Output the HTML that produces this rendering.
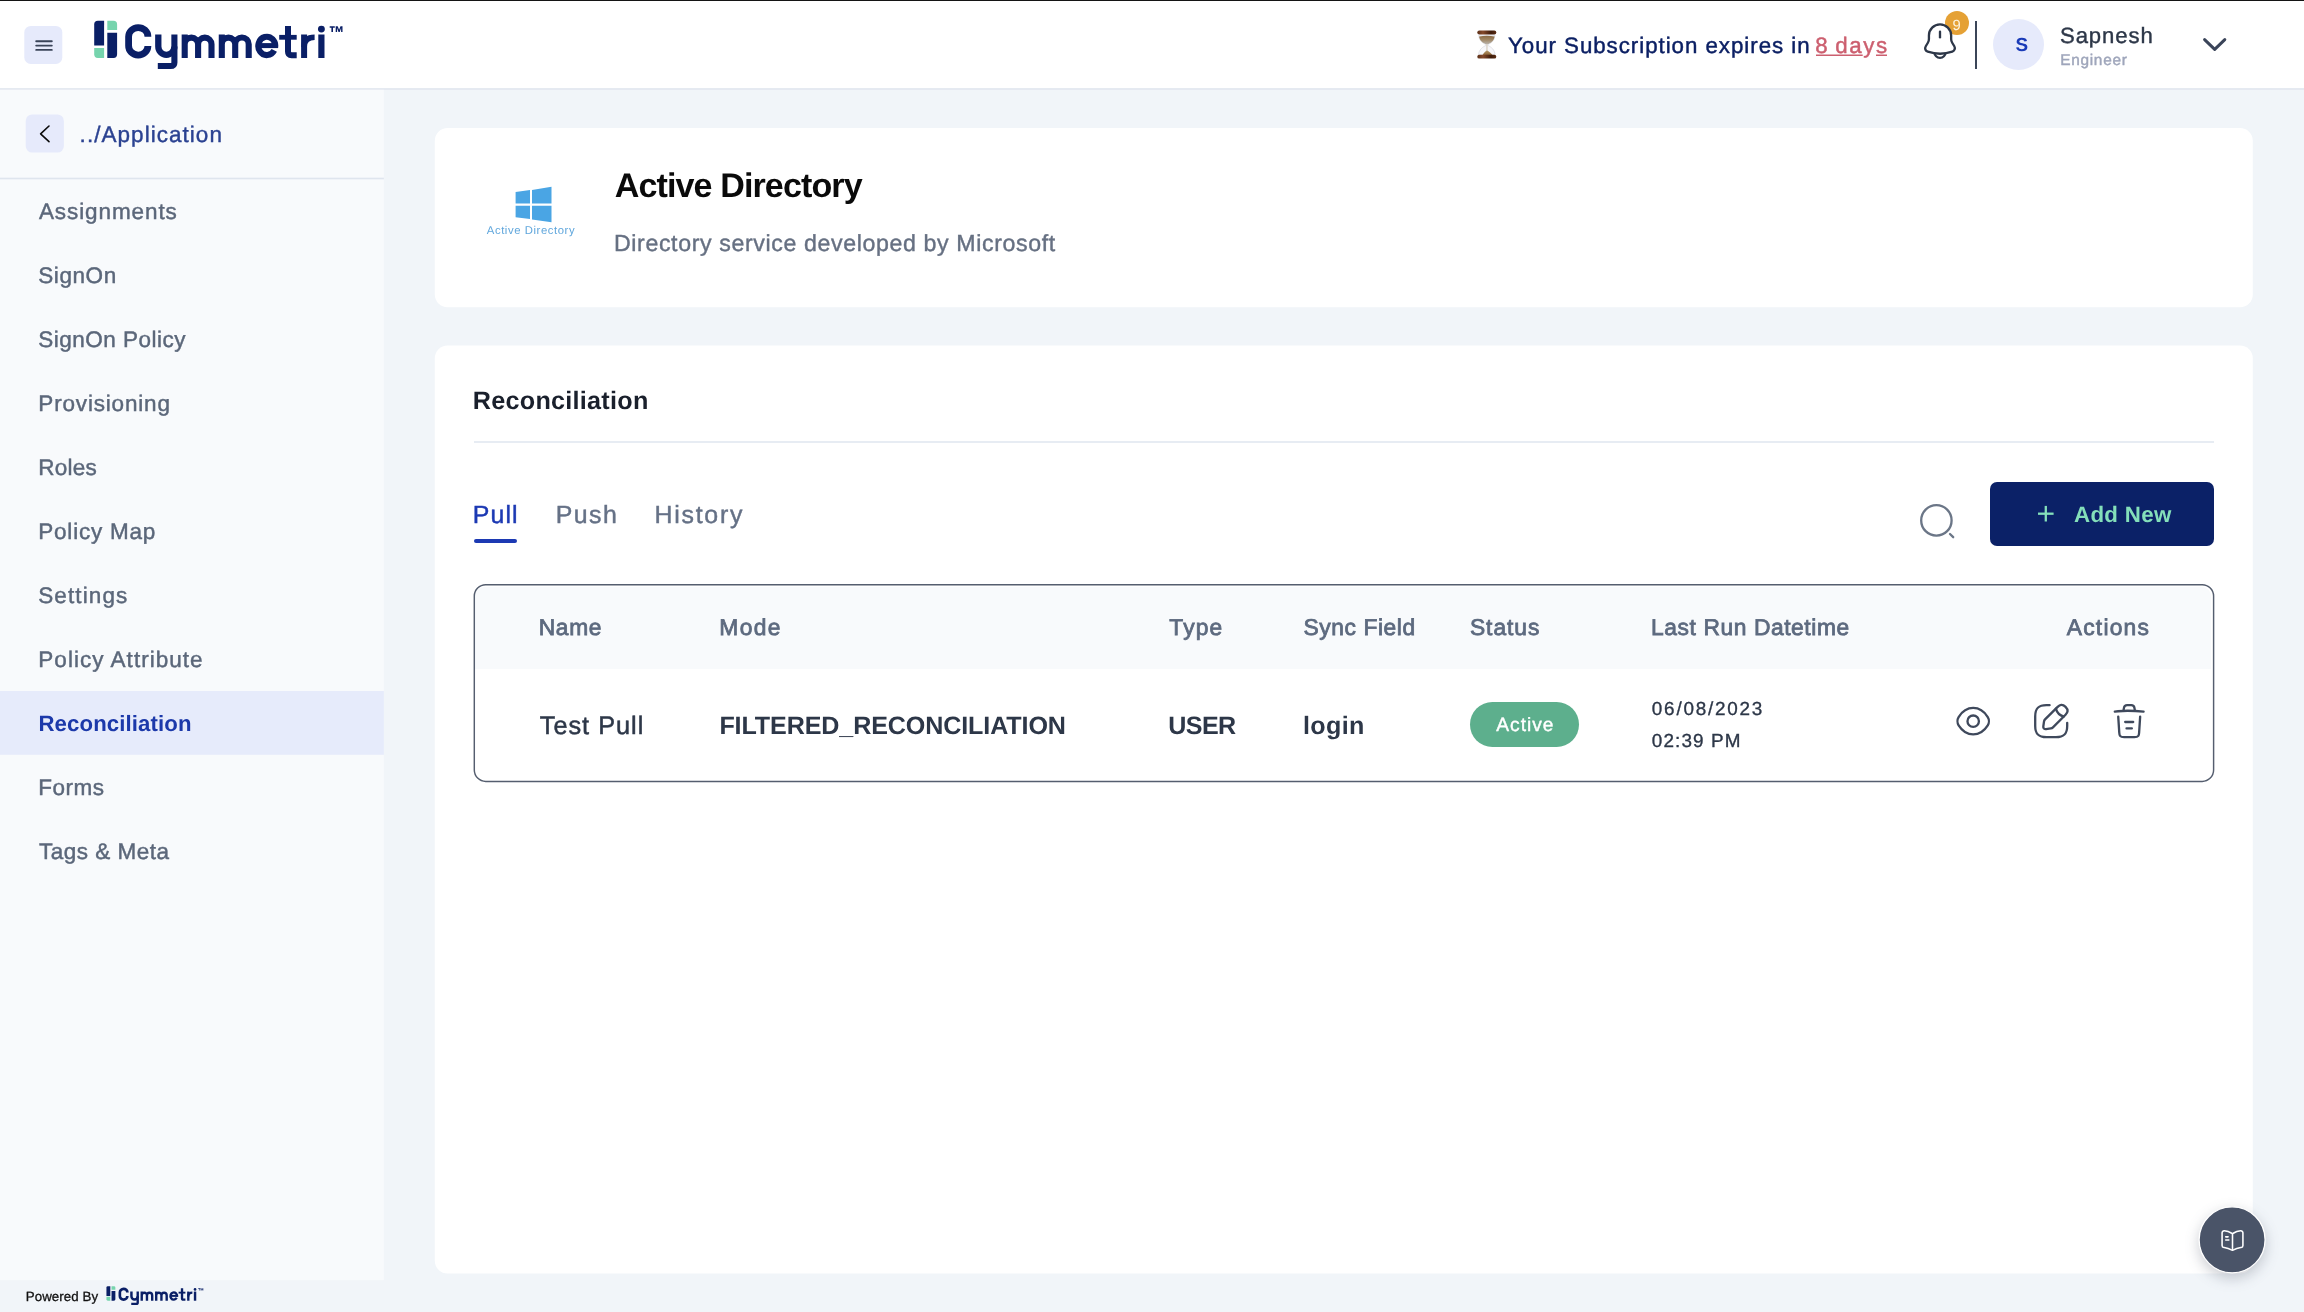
<!DOCTYPE html>
<html lang="en">
<head>
<meta charset="utf-8">
<title>Cymmetri - Reconciliation</title>
<style>
*{box-sizing:border-box;margin:0;padding:0}
html,body{width:2304px;height:1312px;overflow:hidden}
body{text-rendering:geometricPrecision;background:#f1f5f9;font-family:"Liberation Sans",sans-serif;position:relative}
.abs{position:absolute}
.t{position:absolute;white-space:nowrap;font-family:"Liberation Sans",sans-serif}
#topline{left:0;top:0;width:2304px;height:1px;background:#141414}
#header{left:0;top:1px;width:2304px;height:88px;background:#fff;border-bottom:1px solid #e2e8f0}
#sidebar{left:0;top:89px;width:384px;height:1191px;background:#f8fafc}
#sbdiv{left:0;top:178px;width:384px;height:1px;background:#dde4ee}
#active{left:0;top:691px;width:384px;height:64px;background:#e6ebfb}
.sqbtn{width:38px;height:38px;border-radius:7px;background:#e6eafb}
.card{background:#fff;border-radius:16px}
#card1{left:435px;top:128px;width:1817px;height:179px}
#card2{left:435px;top:346px;width:1817px;height:927px}
#hdiv{left:474px;top:441px;width:1740px;height:1px;background:#e2e8f0}
#tabul{left:474px;top:539px;width:43px;height:4px;border-radius:2px;background:#1c39b3}
#addbtn{left:1990px;top:482px;width:224px;height:64px;border-radius:7px;background:#0b2167}
#table{left:474px;top:584px;width:1740px;height:198px;border:1.5px solid #4a5568;border-radius:13px;background:#fff;overflow:hidden}
#thead{left:475px;top:587px;width:1736px;height:81.6px;background:#f8fafc;border-radius:9px 9px 0 0}
#pill{left:1470.4px;top:702.2px;width:108.8px;height:44.7px;border-radius:22.4px;background:#5daf8d}
#fab{left:2198px;top:1206px;width:68px;height:68px;border-radius:50%;background:#4a5468;border:1.5px solid #fff;box-shadow:0 6px 14px rgba(40,50,70,.28)}
#avatar{left:1993px;top:19px;width:51px;height:51px;border-radius:50%;background:#e6eafb}
#badge{left:1945px;top:11px;width:24px;height:24px;border-radius:50%;background:#e5a135}
#vdiv{left:1975px;top:21px;width:2px;height:48px;background:#3b4558}
svg{position:absolute;overflow:visible}
</style>
</head>
<body>
<svg style="left:0;top:0" width="2304" height="1312" viewBox="0 0 2304 1312" shape-rendering="geometricPrecision">
<rect x="0" y="0" width="2304" height="88.2" fill="#fff"/>
<rect x="0" y="88.2" width="2304" height="1.6" fill="#e2e7ef"/>
<rect x="0" y="89.8" width="383.9" height="1190.3" fill="#f8fafc"/>
<rect x="0" y="177.7" width="383.9" height="1.6" fill="#dfe5ee"/>
<rect x="0" y="691" width="383.9" height="63.8" fill="#e6ebfb"/>
<rect x="434.8" y="128.1" width="1818" height="179.1" rx="12.8" fill="#fff"/>
<rect x="434.8" y="345.6" width="1818" height="928" rx="12.8" fill="#fff"/>
<rect x="474" y="441.2" width="1740" height="1.6" fill="#e2e8f0"/>
</svg>
<div class="abs" id="topline"></div>

<!-- menu button -->
<svg style="left:0;top:0" width="100" height="160" viewBox="0 0 100 160"><rect x="24.3" y="25.9" width="38" height="38" rx="6.5" fill="#e6eafb"/><rect x="25.7" y="114.4" width="38.2" height="38.2" rx="6.5" fill="#e6eafb"/></svg>
<svg style="left:24.3px;top:25.9px" width="38" height="38" viewBox="0 0 38 38"><g stroke="#3a4459" stroke-width="1.9" stroke-linecap="round"><line x1="12.2" y1="15.2" x2="27.8" y2="15.2"/><line x1="12.2" y1="19.6" x2="27.8" y2="19.6"/><line x1="12.2" y1="23.9" x2="27.8" y2="23.9"/></g></svg>

<!-- logo -->
<svg style="left:0;top:0" width="400" height="89" viewBox="0 0 400 89">
<defs>
<g id="cymlogo">
  <path d="M94.2 24.4a3.6 3.6 0 0 1 3.6-3.6h6.3v24.8h-9.9z" fill="#0a1f66"/>
  <path d="M94.2 48h9.9v9.9h-6.3a3.6 3.6 0 0 1-3.6-3.6z" fill="#76d4ad"/>
  <path d="M107.3 20.8h6.2a3.6 3.6 0 0 1 3.6 3.6v5.5h-9.8z" fill="#76d4ad"/>
  <path d="M107.3 32.8h9.8v21.5a3.6 3.6 0 0 1-3.6 3.6h-6.2z" fill="#0a1f66"/>
  <g fill="none" stroke="#0a1f66">
    <path d="M147.9 36.7v-.2A9.65 9.1 0 0 0 128.6 36.8V45.8A9.65 9.1 0 0 0 147.9 46.1v-.2" stroke-width="6.8"/>
    <path d="M158.3 34.5V46.6A8.05 8.2 0 0 0 174.4 46.6" stroke-width="6.3"/>
    <path d="M174.4 34.5V62.4Q174.4 66 170.6 66H157.8" stroke-width="6.1"/>
    <path d="M184.7 34.5V58M184.7 44.3A6.7 6.7 0 0 1 198.1 44.3V58M198.1 44.3A6.7 6.7 0 0 1 211.5 44.3V58" stroke-width="6.1"/>
    <path d="M221.8 34.5V58M221.8 44.3A6.7 6.7 0 0 1 235.2 44.3V58M235.2 44.3A6.7 6.7 0 0 1 248.7 44.3V58" stroke-width="6.1"/>
    <path d="M259 45.6H278" stroke-width="5"/>
    <path d="M275.15 47.5A8.5 9.2 0 1 0 274.25 50.3" stroke-width="6"/>
    <path d="M288 26V51.6Q288 55.2 291.6 55.2H296.7" stroke-width="6"/>
    <path d="M279.2 37.3H296.7" stroke-width="4.8"/>
    <path d="M304.1 34.5V58" stroke-width="6"/>
    <path d="M304.1 47Q304.1 37.3 314.6 37.3" stroke-width="5.6"/>
    <path d="M321.4 34.5V58" stroke-width="6.2"/>
  </g>
  <circle cx="321.4" cy="29.1" r="3.45" fill="#0a1f66"/>
  <path d="M329.7 26.2h5.1v1.5h-1.8v4.2h-1.6v-4.2h-1.7zM335.7 31.9v-5.7h2l1.4 3.6 1.4-3.6h2v5.7h-1.4v-3.8l-1.4 3.8h-1.2l-1.4-3.8v3.8z" fill="#0a1f66"/>
</g>
</defs>
<use href="#cymlogo"/>
</svg>


<svg style="left:1800px;top:50px" width="100" height="10" viewBox="1800 50 100 10"><path d="M1816 55.25H1862.7M1876 55.25H1887" stroke="#cc5f6f" stroke-width="1.5"/></svg>
<!-- hourglass -->
<svg style="left:1470px;top:26px" width="34" height="36" viewBox="1470 26 34 36">
<defs>
<linearGradient id="hgcap" x1="0" x2="1" y1="0" y2="0"><stop offset="0" stop-color="#5c3018"/><stop offset=".3" stop-color="#84492a"/><stop offset=".72" stop-color="#3d1b0a"/><stop offset="1" stop-color="#5a2c14"/></linearGradient>
<linearGradient id="hgsand" x1="0" x2="0" y1="0" y2="1"><stop offset="0" stop-color="#8a6a44"/><stop offset=".45" stop-color="#a08663"/><stop offset="1" stop-color="#b9b4ae"/></linearGradient>
<linearGradient id="hgsand2" x1="0" x2="0" y1="0" y2="1"><stop offset="0" stop-color="#b79a6a"/><stop offset="1" stop-color="#8a6236"/></linearGradient>
</defs>
<path d="M1478.8 35.2C1478.8 41 1483.5 43.4 1486.2 44.6V45.4C1483 46.6 1478.6 49.8 1478.6 55H1495C1495 49.8 1490.8 46.6 1487.8 45.4V44.6C1490.4 43.4 1494.8 41 1494.8 35.2Z" fill="#f7f7fa" stroke="#d5d7de" stroke-width=".7"/>
<path d="M1479.1 36.4C1479.6 41 1483.6 43.2 1486.3 44.3H1487.6C1490.2 43.2 1494.1 41 1494.6 36.4C1490 35.5 1484 35.5 1479.1 36.4Z" fill="url(#hgsand)"/>
<rect x="1486.3" y="44" width="1.3" height="8" fill="#d8cfc4"/>
<path d="M1482.6 55C1484 52.6 1485.8 51 1487 50.5C1488.3 51 1490.4 52.6 1492.4 55Z" fill="url(#hgsand2)"/>
<rect x="1477.3" y="30.5" width="19" height="4" rx="2" fill="url(#hgcap)"/>
<rect x="1477.3" y="54.7" width="19" height="3.9" rx="1.95" fill="url(#hgcap)"/>
</svg>


<!-- bell -->
<div class="abs" id="badge"></div>
<svg style="left:1919.9px;top:20.7px" width="40" height="40" viewBox="0 0 24 24" fill="none" stroke="#2d3748" stroke-width="1.4" stroke-linecap="round" stroke-linejoin="round">
<path d="M15.33 18.82C15.33 20.65 13.83 22.15 12 22.15C11.09 22.15 10.25 21.77 9.65 21.17C9.05 20.57 8.67 19.73 8.67 18.82" fill="#fff"/>
<path d="M12.02 2C8.34 2 5.36 4.98 5.36 8.66V10.76C5.36 11.44 5.08 12.46 4.73 13.04L3.46 15.16C2.68 16.47 3.22 17.93 4.66 18.41C9.44 20 14.61 20 19.39 18.41C20.74 17.96 21.32 16.38 20.59 15.16L19.32 13.04C18.97 12.46 18.69 11.43 18.69 10.76V8.66C18.68 5 15.68 2 12.02 2Z" fill="#fff"/>
<path d="M12 6.44V9.77"/>
</svg>

<div class="abs" id="vdiv"></div>
<div class="abs" id="avatar"></div>
<svg style="left:2203px;top:38px" width="24" height="14" viewBox="0 0 24 14"><polyline points="1.6,1.6 11.7,11.4 21.8,1.6" fill="none" stroke="#3a4459" stroke-width="3" stroke-linecap="round" stroke-linejoin="round"/></svg>

<!-- back button -->
<svg style="left:25.8px;top:114.3px" width="38" height="38" viewBox="0 0 38 38"><polyline points="23,12 14.6,19.8 23,27.6" fill="none" stroke="#0b0b0b" stroke-width="1.6" stroke-linecap="round" stroke-linejoin="round"/></svg>


<!-- windows logo -->
<svg style="left:0;top:0" width="2304" height="300" viewBox="0 0 2304 300"><g fill="#4aa5e4">
<polygon points="515.6,192 530,190.1 530,203.6 515.6,203.6"/>
<polygon points="532,189.9 551.5,186.7 551.5,203.4 532,203.5"/>
<polygon points="515.6,205.7 530,205.7 530,219 515.6,217.2"/>
<polygon points="532,205.7 551.5,205.7 551.5,222.3 532,219.5"/>
</g></svg>

<div class="abs" id="tabul"></div>
<div class="abs" id="addbtn"></div>
<svg style="left:2037px;top:505px" width="18" height="18" viewBox="0 0 18 18"><g stroke="#84dfba" stroke-width="2.3" stroke-linecap="butt"><line x1="1" y1="8.7" x2="16.6" y2="8.7"/><line x1="8.8" y1="0.9" x2="8.8" y2="16.5"/></g></svg>
<!-- search -->
<svg style="left:1918.3px;top:502.3px" width="38.4" height="38.4" viewBox="0 0 24 24" fill="none" stroke="#6b7687" stroke-width="1.45" stroke-linecap="round" stroke-linejoin="round"><path d="M11.5 21C16.75 21 21 16.75 21 11.5C21 6.25 16.75 2 11.5 2C6.25 2 2 6.25 2 11.5C2 16.75 6.25 21 11.5 21Z"/><path d="M22 22L20 20"/></svg>

<div class="abs" id="thead"></div>
<svg style="left:0;top:0" width="2304" height="1312" viewBox="0 0 2304 1312"><rect x="474.3" y="584.7" width="1739.3" height="196.7" rx="11.4" fill="none" stroke="#555e6f" stroke-width="1.45"/></svg>
<div class="abs" id="pill"></div>

<svg style="left:1953.8px;top:702.4px" width="38.4" height="38.4" viewBox="0 0 24 24" fill="none" stroke="#3f495c" stroke-width="1.45" stroke-linecap="round" stroke-linejoin="round">
<path d="M15.58 12C15.58 13.98 13.98 15.58 12 15.58C10.02 15.58 8.42 13.98 8.42 12C8.42 10.02 10.02 8.42 12 8.42C13.98 8.42 15.58 10.02 15.58 12Z"/>
<path d="M12 20.27C15.53 20.27 18.82 18.19 21.11 14.59C22.01 13.18 22.01 10.81 21.11 9.4C18.82 5.8 15.53 3.72 12 3.72C8.47 3.72 5.18 5.8 2.89 9.4C1.99 10.81 1.99 13.18 2.89 14.59C5.18 18.19 8.47 20.27 12 20.27Z"/>
</svg>
<svg style="left:2032px;top:702.2px" width="38.4" height="38.4" viewBox="0 0 24 24" fill="none" stroke="#3f495c" stroke-width="1.45" stroke-linecap="round" stroke-linejoin="round">
<path d="M11 2H9C4 2 2 4 2 9V15C2 20 4 22 9 22H15C20 22 22 20 22 15V13"/>
<path d="M16.04 3.02L8.16 10.9C7.86 11.2 7.56 11.79 7.5 12.22L7.07 15.23C6.91 16.32 7.68 17.08 8.77 16.93L11.78 16.5C12.2 16.44 12.79 16.14 13.1 15.84L20.98 7.96C22.34 6.6 22.98 5.02 20.98 3.02C18.98 1.02 17.4 1.66 16.04 3.02Z"/>
<path d="M14.91 4.15C15.58 6.54 17.45 8.41 19.85 9.09"/>
</svg>
<svg style="left:2110.3px;top:702.2px" width="38.4" height="38.4" viewBox="0 0 24 24" fill="none" stroke="#3f495c" stroke-width="1.45" stroke-linecap="round" stroke-linejoin="round">
<path d="M21 5.98C17.67 5.65 14.32 5.48 10.98 5.48C9 5.48 7.02 5.58 5.04 5.78L3 5.98"/>
<path d="M8.5 4.97L8.72 3.66C8.88 2.71 9 2 10.69 2H13.31C15 2 15.13 2.75 15.28 3.67L15.5 4.97"/>
<path d="M18.85 9.14L18.2 19.21C18.09 20.78 18 22 15.21 22H8.79C6 22 5.91 20.78 5.8 19.21L5.15 9.14"/>
<path d="M10.33 16.5H13.66"/>
<path d="M9.5 12.5H14.5"/>
</svg>


<svg style="left:2182px;top:1190px;filter:drop-shadow(0 5px 7px rgba(40,50,70,.24))" width="100" height="100" viewBox="2182 1190 100 100"><circle cx="2232.1" cy="1239.8" r="33" fill="#4a5468" stroke="#fff" stroke-width="1.3"/></svg>
<svg style="left:2219.6px;top:1227.5px" width="25" height="25" viewBox="0 0 24 24" fill="none" stroke="#ffffff" stroke-width="1.5" stroke-linecap="round" stroke-linejoin="round">
<path d="M22 16.74V4.67C22 3.47 21.02 2.58 19.83 2.68H19.77C17.67 2.86 14.48 3.93 12.7 5.05L12.53 5.16C12.24 5.34 11.76 5.34 11.47 5.16L11.22 5.01C9.44 3.9 6.26 2.84 4.16 2.67C2.97 2.57 2 3.47 2 4.66V16.74C2 17.7 2.78 18.6 3.74 18.72L4.03 18.76C6.2 19.05 9.55 20.15 11.47 21.2L11.51 21.22C11.78 21.37 12.21 21.37 12.47 21.22C14.39 20.16 17.75 19.05 19.93 18.76L20.26 18.72C21.22 18.6 22 17.7 22 16.74Z"/>
<path d="M12 5.49V20.49"/>
<path d="M7.75 8.49H5.5"/>
<path d="M8.5 11.49H5.5"/>
</svg>


<svg style="left:0;top:1280px" width="400" height="32" viewBox="0 1280 400 32"><use href="#cymlogo" transform="translate(69.7 1278.1) scale(0.39)"/></svg>


<div id="textlayer" style="position:absolute;left:0;top:0;width:2304px;height:1312px;will-change:transform">
<span class="t" style="left:79.61px;top:124px;font-size:22.5px;line-height:22.5px;font-weight:400;color:#2b4291;letter-spacing:1.038px;-webkit-text-stroke:0.4px #2b4291;">../Application</span>
<span class="t" style="left:38.91px;top:201px;font-size:22.5px;line-height:22.5px;font-weight:400;color:#5b677a;letter-spacing:0.91px;-webkit-text-stroke:0.45px #5b677a;">Assignments</span>
<span class="t" style="left:38.26px;top:265px;font-size:22.5px;line-height:22.5px;font-weight:400;color:#5b677a;letter-spacing:0.582px;-webkit-text-stroke:0.45px #5b677a;">SignOn</span>
<span class="t" style="left:38.26px;top:329px;font-size:22.5px;line-height:22.5px;font-weight:400;color:#5b677a;letter-spacing:0.502px;-webkit-text-stroke:0.45px #5b677a;">SignOn Policy</span>
<span class="t" style="left:38.34px;top:393px;font-size:22.5px;line-height:22.5px;font-weight:400;color:#5b677a;letter-spacing:0.822px;-webkit-text-stroke:0.45px #5b677a;">Provisioning</span>
<span class="t" style="left:38.34px;top:457px;font-size:22.5px;line-height:22.5px;font-weight:400;color:#5b677a;letter-spacing:0.205px;-webkit-text-stroke:0.45px #5b677a;">Roles</span>
<span class="t" style="left:38.34px;top:521px;font-size:22.5px;line-height:22.5px;font-weight:400;color:#5b677a;letter-spacing:0.76px;-webkit-text-stroke:0.45px #5b677a;">Policy Map</span>
<span class="t" style="left:38.26px;top:585px;font-size:22.5px;line-height:22.5px;font-weight:400;color:#5b677a;letter-spacing:1.103px;-webkit-text-stroke:0.45px #5b677a;">Settings</span>
<span class="t" style="left:38.34px;top:649px;font-size:22.5px;line-height:22.5px;font-weight:400;color:#5b677a;letter-spacing:1.031px;-webkit-text-stroke:0.45px #5b677a;">Policy Attribute</span>
<span class="t" style="left:38.49px;top:713px;font-size:22.2px;line-height:22.2px;font-weight:700;color:#1c39aa;letter-spacing:0.101px;">Reconciliation</span>
<span class="t" style="left:38.34px;top:777px;font-size:22.5px;line-height:22.5px;font-weight:400;color:#5b677a;letter-spacing:0.47px;-webkit-text-stroke:0.45px #5b677a;">Forms</span>
<span class="t" style="left:38.99px;top:841px;font-size:22.5px;line-height:22.5px;font-weight:400;color:#5b677a;letter-spacing:0.509px;-webkit-text-stroke:0.45px #5b677a;">Tags &amp; Meta</span>
<span class="t" style="left:1507.99px;top:35px;font-size:22.3px;line-height:22.3px;font-weight:400;color:#0b1f63;letter-spacing:0.965px;-webkit-text-stroke:0.45px #0b1f63;">Your Subscription expires in</span>
<span class="t" style="left:1815.33px;top:35px;font-size:22.3px;line-height:22.3px;font-weight:400;color:#cc5f6f;letter-spacing:0px;-webkit-text-stroke:0.45px #cc5f6f;">8</span>
<span class="t" style="left:1835.18px;top:35px;font-size:22.3px;line-height:22.3px;font-weight:400;color:#cc5f6f;letter-spacing:1.657px;-webkit-text-stroke:0.45px #cc5f6f;">days</span>
<span class="t" style="left:2059.99px;top:25px;font-size:22.1px;line-height:22.1px;font-weight:400;color:#2d3748;letter-spacing:0.93px;-webkit-text-stroke:0.4px #2d3748;">Sapnesh</span>
<span class="t" style="left:2060.20px;top:53px;font-size:15.4px;line-height:15.4px;font-weight:400;color:#9fa6bb;letter-spacing:0.719px;-webkit-text-stroke:0.45px #9fa6bb;">Engineer</span>
<span class="t" style="left:2015.60px;top:37px;font-size:18.9px;line-height:18.9px;font-weight:700;color:#1a3bb8;letter-spacing:0px;">S</span>
<span class="t" style="left:1952.50px;top:19px;font-size:14.8px;line-height:14.8px;font-weight:400;color:#fdf3df;letter-spacing:0px;">9</span>
<span class="t" style="left:614.73px;top:169px;font-size:34.1px;line-height:34.1px;font-weight:700;color:#0a0a0a;letter-spacing:-0.897px;">Active Directory</span>
<span class="t" style="left:613.99px;top:232px;font-size:23.2px;line-height:23.2px;font-weight:400;color:#667082;letter-spacing:0.606px;-webkit-text-stroke:0.4px #667082;">Directory service developed by Microsoft</span>
<span class="t" style="left:486.81px;top:226px;font-size:11.3px;line-height:11.3px;font-weight:400;color:#5fa6dc;letter-spacing:0.58px;">Active Directory</span>
<span class="t" style="left:472.81px;top:389px;font-size:25.2px;line-height:25.2px;font-weight:700;color:#1a202c;letter-spacing:0.258px;">Reconciliation</span>
<span class="t" style="left:472.84px;top:503px;font-size:24.9px;line-height:24.9px;font-weight:400;color:#1c39b3;letter-spacing:1.107px;-webkit-text-stroke:0.45px #1c39b3;">Pull</span>
<span class="t" style="left:555.63px;top:503px;font-size:24.9px;line-height:24.9px;font-weight:400;color:#657186;letter-spacing:1.5px;-webkit-text-stroke:0.45px #657186;">Push</span>
<span class="t" style="left:654.54px;top:503px;font-size:24.9px;line-height:24.9px;font-weight:400;color:#657186;letter-spacing:1.73px;-webkit-text-stroke:0.45px #657186;">History</span>
<span class="t" style="left:2073.97px;top:504px;font-size:22.3px;line-height:22.3px;font-weight:700;color:#84dfba;letter-spacing:0.322px;">Add New</span>
<span class="t" style="left:538.69px;top:616px;font-size:22.8px;line-height:22.8px;font-weight:400;color:#5d6a7f;letter-spacing:0.66px;-webkit-text-stroke:0.8px #5d6a7f;">Name</span>
<span class="t" style="left:719.34px;top:616px;font-size:22.8px;line-height:22.8px;font-weight:400;color:#5d6a7f;letter-spacing:1.343px;-webkit-text-stroke:0.8px #5d6a7f;">Mode</span>
<span class="t" style="left:1169.36px;top:616px;font-size:22.8px;line-height:22.8px;font-weight:400;color:#5d6a7f;letter-spacing:1.16px;-webkit-text-stroke:0.8px #5d6a7f;">Type</span>
<span class="t" style="left:1303.58px;top:616px;font-size:22.8px;line-height:22.8px;font-weight:400;color:#5d6a7f;letter-spacing:0.573px;-webkit-text-stroke:0.8px #5d6a7f;">Sync Field</span>
<span class="t" style="left:1469.88px;top:616px;font-size:22.8px;line-height:22.8px;font-weight:400;color:#5d6a7f;letter-spacing:0.986px;-webkit-text-stroke:0.8px #5d6a7f;">Status</span>
<span class="t" style="left:1651.09px;top:616px;font-size:22.8px;line-height:22.8px;font-weight:400;color:#5d6a7f;letter-spacing:0.582px;-webkit-text-stroke:0.8px #5d6a7f;">Last Run Datetime</span>
<span class="t" style="left:2066.79px;top:616px;font-size:22.8px;line-height:22.8px;font-weight:400;color:#5d6a7f;letter-spacing:1.22px;-webkit-text-stroke:0.8px #5d6a7f;">Actions</span>
<span class="t" style="left:539.76px;top:714px;font-size:25.3px;line-height:25.3px;font-weight:400;color:#2d3748;letter-spacing:0.991px;-webkit-text-stroke:0.5px #2d3748;">Test Pull</span>
<span class="t" style="left:719.42px;top:714px;font-size:25.1px;line-height:25.1px;font-weight:700;color:#2d3748;letter-spacing:-0.111px;">FILTERED_RECONCILIATION</span>
<span class="t" style="left:1168.37px;top:714px;font-size:25.1px;line-height:25.1px;font-weight:700;color:#2d3748;letter-spacing:-0.63px;">USER</span>
<span class="t" style="left:1303.06px;top:714px;font-size:25.1px;line-height:25.1px;font-weight:700;color:#2d3748;letter-spacing:0.318px;">login</span>
<span class="t" style="left:1496.29px;top:716px;font-size:19.2px;line-height:19.2px;font-weight:400;color:#ffffff;letter-spacing:0.988px;-webkit-text-stroke:0.4px #ffffff;">Active</span>
<span class="t" style="left:1651.84px;top:701px;font-size:18.9px;line-height:18.9px;font-weight:400;color:#2d3748;letter-spacing:1.776px;-webkit-text-stroke:0.35px #2d3748;">06/08/2023</span>
<span class="t" style="left:1651.84px;top:733px;font-size:18.9px;line-height:18.9px;font-weight:400;color:#2d3748;letter-spacing:1.123px;-webkit-text-stroke:0.35px #2d3748;">02:39 PM</span>
<span class="t" style="left:25.74px;top:1290px;font-size:13.3px;line-height:13.3px;font-weight:400;color:#111111;letter-spacing:0.081px;-webkit-text-stroke:0.3px #111111;">Powered By</span>
</div>
</body>
</html>
